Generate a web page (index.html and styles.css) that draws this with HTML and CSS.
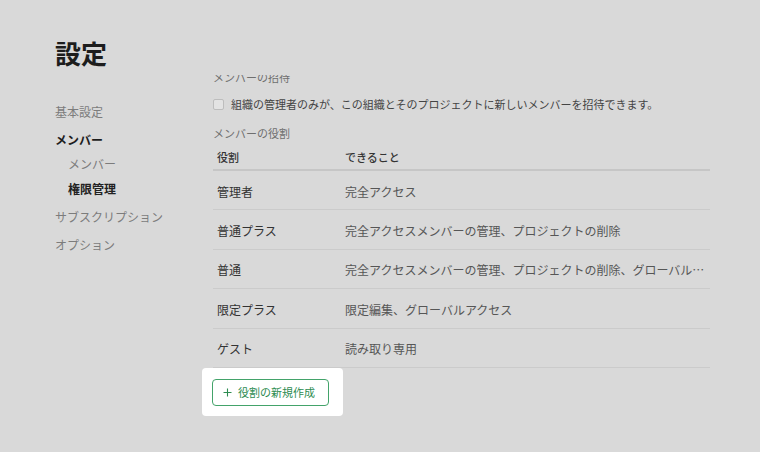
FILE: index.html
```html
<!DOCTYPE html>
<html lang="ja">
<head>
<meta charset="utf-8">
<title>設定</title>
<link rel="stylesheet" href="styles.css">
</head>
<body>
<div class="page">
  <aside class="sidebar">
    <h1 class="title">設定</h1>
    <nav class="nav">
      <a class="nav-item">基本設定</a>
      <a class="nav-item active">メンバー</a>
      <a class="nav-item sub">メンバー</a>
      <a class="nav-item sub current">権限管理</a>
      <a class="nav-item">サブスクリプション</a>
      <a class="nav-item">オプション</a>
    </nav>
  </aside>

  <main class="content">
    <div class="scroll">
      <h2 class="section-label first">メンバーの招待</h2>
      <label class="check-row">
        <span class="checkbox"></span>
        <span>組織の管理者のみが、この組織とそのプロジェクトに新しいメンバーを招待できます。</span>
      </label>

      <h2 class="section-label">メンバーの役割</h2>
      <div class="roles">
        <div class="row head">
          <div class="cell name">役割</div>
          <div class="cell perm">できること</div>
        </div>
        <div class="row">
          <div class="cell name">管理者</div>
          <div class="cell perm">完全アクセス</div>
        </div>
        <div class="row">
          <div class="cell name">普通プラス</div>
          <div class="cell perm">完全アクセスメンバーの管理、プロジェクトの削除</div>
        </div>
        <div class="row">
          <div class="cell name">普通</div>
          <div class="cell perm">完全アクセスメンバーの管理、プロジェクトの削除、グローバルアクセス</div>
        </div>
        <div class="row">
          <div class="cell name">限定プラス</div>
          <div class="cell perm">限定編集、グローバルアクセス</div>
        </div>
        <div class="row">
          <div class="cell name">ゲスト</div>
          <div class="cell perm">読み取り専用</div>
        </div>
      </div>

      <div class="spotlight">
        <button class="btn-new" type="button">
          <svg class="plus" width="9" height="9" viewBox="0 0 9 9" aria-hidden="true">
            <path d="M4.5 0.5v8M0.5 4.5h8" stroke="currentColor" stroke-width="1.1" fill="none"/>
          </svg>
          <span>役割の新規作成</span>
        </button>
      </div>
    </div>
  </main>
</div>
</body>
</html>
```

FILE: styles.css
```css
* {
  box-sizing: border-box;
}

html,
body {
  margin: 0;
  height: 100%;
}

body {
  background: #d9d9d9;
  font-family: "Noto Sans CJK JP", "Noto Sans", sans-serif;
  color: #3c3c3c;
  overflow: hidden;
}

.page {
  display: flex;
  height: 100%;
  padding-left: 55px;
}

/* ---- sidebar ---- */
.sidebar {
  width: 147px;
  flex: none;
  padding-top: 36px;
}

.title {
  margin: 0;
  font-size: 26px;
  line-height: 34px;
  font-weight: 700;
  color: #1d1d1d;
}

.nav {
  display: flex;
  flex-direction: column;
  margin-top: 32px;
}

.nav-item {
  font-size: 12px;
  line-height: 20px;
  color: #7c7c7c;
  margin-top: 8px;
}

.nav-item:first-child {
  margin-top: 0;
}

.nav-item.active {
  color: #1d1d1d;
  font-weight: 700;
}

.nav-item.sub {
  padding-left: 13px;
  margin-top: 4px;
}

.nav-item.sub.current {
  margin-top: 5px;
  color: #222;
  font-weight: 700;
}

.nav-item.sub + .nav-item:not(.sub) {
  margin-top: 8px;
}

/* ---- content (scrolled area) ---- */
.content {
  flex: none;
  width: 508px;
  padding-left: 11px;
  margin-top: 75px;
  height: calc(100% - 75px);
  overflow: hidden;
}

.scroll {
  display: flow-root;
  margin-top: -6px;
}

.section-label {
  margin: 13px 0 0;
  font-size: 11px;
  line-height: 16px;
  font-weight: 400;
  color: #6f6f6f;
}

.section-label.first {
  margin-top: 0;
}

.check-row {
  display: flex;
  align-items: center;
  gap: 7px;
  margin-top: 11px;
  font-size: 11px;
  line-height: 16px;
  color: #444;
}

.checkbox {
  width: 11px;
  height: 11px;
  border: 1px solid #bdbdbd;
  border-radius: 2px;
  background: #e3e3e3;
  flex: none;
}

/* ---- roles table ---- */
.roles {
  margin-top: 4px;
}

.row {
  display: flex;
  align-items: center;
  height: 39.4px;
  padding-top: 2px;
  border-bottom: 1px solid #cbcbcb;
  font-size: 12px;
}

.row.head {
  height: 26px;
  padding-top: 0;
  padding-bottom: 1px;
  border-bottom: 2px solid #c6c6c6;
  font-size: 11px;
  color: #333;
  font-weight: 500;
}

.cell {
  padding: 0 4px;
  white-space: nowrap;
  overflow: hidden;
  text-overflow: ellipsis;
}

.cell.name {
  width: 128px;
  flex: none;
  color: #333;
}

.row .cell.perm {
  flex: 1;
  min-width: 0;
  color: #565656;
}

.row.head .cell {
  color: #333;
}

/* ---- highlighted action ---- */
.spotlight {
  display: inline-flex;
  margin-left: -11px;
  padding: 11px 14px 10px 10px;
  background: #fff;
  border-radius: 4px;
}

.btn-new {
  display: flex;
  align-items: center;
  gap: 6px;
  width: 117px;
  height: 27px;
  padding: 0 0 0 10px;
  border: 1px solid #43a36a;
  border-radius: 4px;
  background: #fff;
  color: #2d8c51;
  font-family: inherit;
  font-size: 11px;
  line-height: 1;
}

.plus {
  flex: none;
}
```
